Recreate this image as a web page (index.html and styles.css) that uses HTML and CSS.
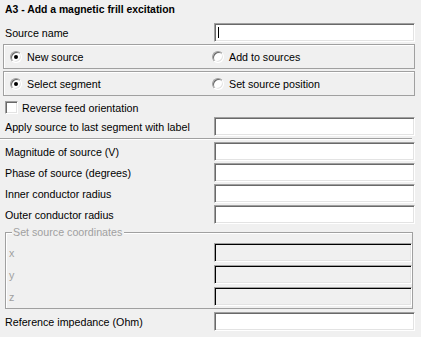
FILE: index.html
```html
<!DOCTYPE html>
<html>
<head>
<meta charset="utf-8">
<link rel="stylesheet" href="styles.css">
</head>
<body>
<div class="panel">
  <h1 class="title">A3 - Add a magnetic frill excitation</h1>

  <div class="row first">
    <span class="lbl">Source name</span>
    <span class="field caret"></span>
  </div>

  <div class="group g1">
    <span class="opt"><span class="radio on"></span>New source</span>
    <span class="opt"><span class="radio"></span>Add to sources</span>
  </div>
  <div class="group g2">
    <span class="opt"><span class="radio on"></span>Select segment</span>
    <span class="opt"><span class="radio"></span>Set source position</span>
  </div>

  <div class="check-row">
    <span class="check"></span>Reverse feed orientation
  </div>

  <div class="row apply">
    <span class="lbl">Apply source to last segment with label</span>
    <span class="field"></span>
  </div>

  <div class="sep"></div>

  <div class="rows">
    <div class="row">
      <span class="lbl">Magnitude of source (V)</span>
      <span class="field"></span>
    </div>
    <div class="row">
      <span class="lbl">Phase of source (degrees)</span>
      <span class="field"></span>
    </div>
    <div class="row">
      <span class="lbl">Inner conductor radius</span>
      <span class="field"></span>
    </div>
    <div class="row">
      <span class="lbl">Outer conductor radius</span>
      <span class="field"></span>
    </div>
  </div>

  <div class="coords">
    <span class="legend">Set source coordinates</span>
    <div class="crow"><span class="clbl">x</span><span class="field disabled"></span></div>
    <div class="crow"><span class="clbl">y</span><span class="field disabled"></span></div>
    <div class="crow"><span class="clbl">z</span><span class="field disabled"></span></div>
  </div>

  <div class="row ref">
    <span class="lbl">Reference impedance (Ohm)</span>
    <span class="field"></span>
  </div>
</div>
</body>
</html>
```

FILE: styles.css
```css
* { box-sizing: border-box; }

body {
  margin: 0;
  width: 421px;
  height: 337px;
  overflow: hidden;
  background: #f0f0f0;
  font-family: "Liberation Sans", Arial, sans-serif;
  font-size: 10.7px;
  color: #000;
}

.panel {
  display: flex;
  flex-direction: column;
  padding-top: 3px;
}

.title {
  margin: 0 0 0 5px;
  font-size: 10.4px;
  font-weight: bold;
  line-height: 14px;
  height: 14px;
}

.row {
  display: grid;
  grid-template-columns: 214px 201px;
  align-items: center;
  height: 19px;
}

.row .lbl {
  padding-left: 5px;
  white-space: nowrap;
}

.row.first { margin-top: 6px; }
.row.apply { margin-top: 3px; }
.row.ref { margin-top: 3px; }

.field {
  display: flex;
  align-items: center;
  height: 19px;
  background: #fff;
  border: 1px solid;
  border-color: #a0a0a0 #fff #fff #a0a0a0;
  box-shadow: inset 1px 1px 0 #696969, inset -1px -1px 0 #e3e3e3;
}

.field.caret::before {
  content: "";
  width: 1px;
  height: 11px;
  margin-left: 3px;
  background: #000;
}

.field.disabled {
  background: #f0f0f0;
  box-shadow: inset 1px 1px 0 #000, inset -1px -1px 0 #e3e3e3;
}

.group {
  display: grid;
  grid-template-columns: 202px 1fr;
  align-items: center;
  margin-left: 3px;
  width: 412px;
  height: 25px;
  padding-left: 6px;
  border: 1px solid #a0a0a0;
  box-shadow: inset 1px 1px 0 #fff;
}

.group.g1 { margin-top: 2px; }
.group.g2 { margin-top: 2px; }

.opt {
  display: flex;
  align-items: center;
  gap: 5px;
  white-space: nowrap;
}

.radio {
  display: flex;
  align-items: center;
  justify-content: center;
  width: 12px;
  height: 12px;
  border-radius: 50%;
  background: #fff;
  border: 1px solid;
  border-color: #a0a0a0 #fff #fff #a0a0a0;
  box-shadow: inset 1px 1px 0 #696969, inset -1px -1px 0 #e3e3e3;
}

.radio.on::after {
  content: "";
  width: 4px;
  height: 4px;
  border-radius: 50%;
  background: #000;
}

.check-row {
  display: flex;
  align-items: center;
  gap: 4px;
  margin-top: 5px;
  padding-left: 5px;
  height: 13px;
}

.check {
  width: 13px;
  height: 13px;
  background: #fff;
  border: 1px solid;
  border-color: #a0a0a0 #fff #fff #a0a0a0;
  box-shadow: inset 1px 1px 0 #696969, inset -1px -1px 0 #e3e3e3;
}

.sep {
  margin-top: 2px;
  width: 412px;
  height: 2px;
  border-top: 1px solid #a0a0a0;
  border-bottom: 1px solid #fff;
}

.rows {
  display: flex;
  flex-direction: column;
  gap: 2px;
  margin-top: 2px;
}

.coords {
  position: relative;
  display: flex;
  flex-direction: column;
  gap: 3px;
  margin-top: 8px;
  margin-left: 5px;
  width: 408px;
  padding: 10px 0 2px 3px;
  border: 1px solid #a0a0a0;
  box-shadow: inset 1px 1px 0 #fff;
}

.legend {
  position: absolute;
  top: -8px;
  left: 6px;
  padding: 0 2px 0 1px;
  line-height: 14px;
  background: #f0f0f0;
  color: #a0a0a0;
}

.crow {
  display: grid;
  grid-template-columns: 205px 198px;
  align-items: center;
  height: 19px;
}

.clbl {
  color: #a0a0a0;
}
```
